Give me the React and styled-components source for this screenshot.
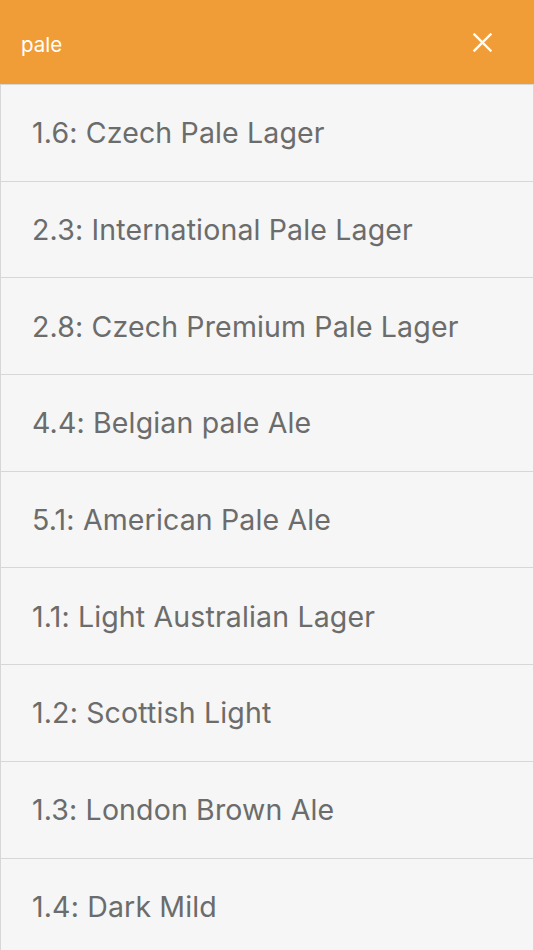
import styled, { createGlobalStyle } from "styled-components";

const GlobalStyle = createGlobalStyle`
  html, body {
    margin: 0;
    padding: 0;
    background: #f5f6f5;
  }
  body {
    font-family: Inter, "Open Sans", "Liberation Sans", sans-serif;
    overflow: hidden;
  }
`;

const Page = styled.div`
  width: 534px;
  height: 950px;
  overflow: hidden;
  background: #f5f6f5;
`;

const Header = styled.header`
  height: 84px;
  background: #f09d38;
  display: flex;
  align-items: center;
  justify-content: space-between;
  padding: 0 42px 0 21px;
  box-sizing: border-box;
`;

const Query = styled.span`
  color: #fff;
  font-size: 20.5px;
  line-height: 1;
  margin-top: 6px;
`;

const ClearButton = styled.button`
  border: none;
  background: none;
  padding: 0;
  width: 20px;
  height: 20px;
  display: flex;
  align-items: center;
  justify-content: center;
  cursor: pointer;
`;

const List = styled.ul`
  list-style: none;
  margin: 0;
  padding: 0;
`;

const Row = styled.li`
  height: 95.7px;
  border: 1px solid #d6d7d6;
  border-bottom: none;
  display: flex;
  align-items: center;
  padding-left: 31px;
  color: #6b6c6b;
  font-size: 28.5px;
  letter-spacing: 0.15px;
`;

const styles = [
  "1.6: Czech Pale Lager",
  "2.3: International Pale Lager",
  "2.8: Czech Premium Pale Lager",
  "4.4: Belgian pale Ale",
  "5.1: American Pale Ale",
  "1.1: Light Australian Lager",
  "1.2: Scottish Light",
  "1.3: London Brown Ale",
  "1.4: Dark Mild",
];

export default function App() {
  return (
    <Page>
      <GlobalStyle />
      <Header>
        <Query>pale</Query>
        <ClearButton>
          <svg width="19" height="19" viewBox="0 0 19 19">
            <path d="M1.5 1.5 L17.5 17.5 M17.5 1.5 L1.5 17.5" stroke="#fff" strokeWidth="2.4" strokeLinecap="square" />
          </svg>
        </ClearButton>
      </Header>
      <List>
        {styles.map((s) => (
          <Row key={s}>{s}</Row>
        ))}
      </List>
    </Page>
  );
}
